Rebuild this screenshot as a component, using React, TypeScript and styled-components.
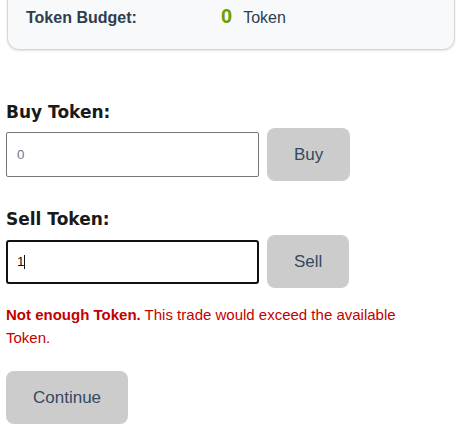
import React from "react";
import styled, { createGlobalStyle } from "styled-components";

const Global = createGlobalStyle`
  html, body { margin: 0; padding: 0; background: #fff; }
  body { font-family: "Liberation Sans", Arial, sans-serif; color: #2c3e50; }
  * { box-sizing: border-box; }
`;

const Page = styled.div`
  padding: 0 6px;
  display: flex;
  flex-direction: column;
`;

const Card = styled.div`
  margin: -17px 1px 0;
  padding: 21px 18px 19px;
  background: #f8f9fa;
  border: 1px solid #d6d6d6;
  border-radius: 12px;
  box-shadow: 0 1px 2px rgba(0, 0, 0, 0.12);
`;

const BudgetRow = styled.div`
  display: grid;
  grid-template-columns: 195px auto;
  align-items: baseline;
`;

const BudgetLabel = styled.span`
  font-size: 16px;
  font-weight: bold;
  color: #2c3e50;
  line-height: 24px;
`;

const BudgetValue = styled.span`
  display: flex;
  align-items: baseline;
  gap: 11px;
  font-size: 16px;
  color: #2c3e50;
`;

const Amount = styled.span`
  font-size: 20px;
  font-weight: bold;
  color: #6b9f00;
`;

const Section = styled.div<{ $top: number }>`
  display: flex;
  flex-direction: column;
  margin-top: ${(p) => p.$top}px;
`;

const Label = styled.label`
  font-family: "DejaVu Sans", sans-serif;
  font-weight: bold;
  font-size: 17px;
  line-height: 20px;
  color: #1a1a1a;
  margin-bottom: 6px;
`;

const Row = styled.div`
  display: flex;
  align-items: center;
  gap: 8px;
`;

const Field = styled.div`
  position: relative;
  width: 253px;
`;

const Input = styled.input<{ $active?: boolean }>`
  width: 253px;
  height: ${(p) => (p.$active ? 44 : 45)}px;
  padding: 0 ${(p) => (p.$active ? 9 : 10)}px;
  font-family: "Liberation Sans", Arial, sans-serif;
  font-size: 13.333px;
  color: #111;
  background: #fff;
  border: ${(p) => (p.$active ? "2px solid #111" : "1px solid #767676")};
  border-radius: ${(p) => (p.$active ? 3 : 2)}px;
  outline: none;
  caret-color: transparent;
  &::placeholder { color: #6f7b87; }
`;

const Caret = styled.span`
  position: absolute;
  left: 18px;
  top: 15px;
  width: 1px;
  height: 14px;
  background: #111;
`;

const Button = styled.button`
  padding: 16px 27px;
  font-family: "Liberation Sans", Arial, sans-serif;
  font-size: 17px;
  line-height: 21px;
  color: #34495e;
  background: #cccccc;
  border: none;
  border-radius: 8px;
`;

const ErrorText = styled.p`
  margin: 15px 0 0;
  max-width: 420px;
  font-size: 15px;
  line-height: 23px;
  color: #c40000;
`;

const ContinueWrap = styled.div`
  margin-top: 22px;
  display: flex;
`;

export default function App() {
  return (
    <>
      <Global />
      <Page>
        <Card>
          <BudgetRow>
            <BudgetLabel>Token Budget:</BudgetLabel>
            <BudgetValue>
              <Amount>0</Amount>
              <span>Token</span>
            </BudgetValue>
          </BudgetRow>
        </Card>

        <Section $top={52}>
          <Label>Buy Token:</Label>
          <Row>
            <Field>
              <Input placeholder="0" readOnly />
            </Field>
            <Button>Buy</Button>
          </Row>
        </Section>

        <Section $top={28}>
          <Label>Sell Token:</Label>
          <Row>
            <Field>
              <Input $active defaultValue="1" readOnly />
              <Caret />
            </Field>
            <Button>Sell</Button>
          </Row>
        </Section>

        <ErrorText>
          <strong>Not enough Token.</strong> This trade would exceed the available Token.
        </ErrorText>

        <ContinueWrap>
          <Button>Continue</Button>
        </ContinueWrap>
      </Page>
    </>
  );
}
